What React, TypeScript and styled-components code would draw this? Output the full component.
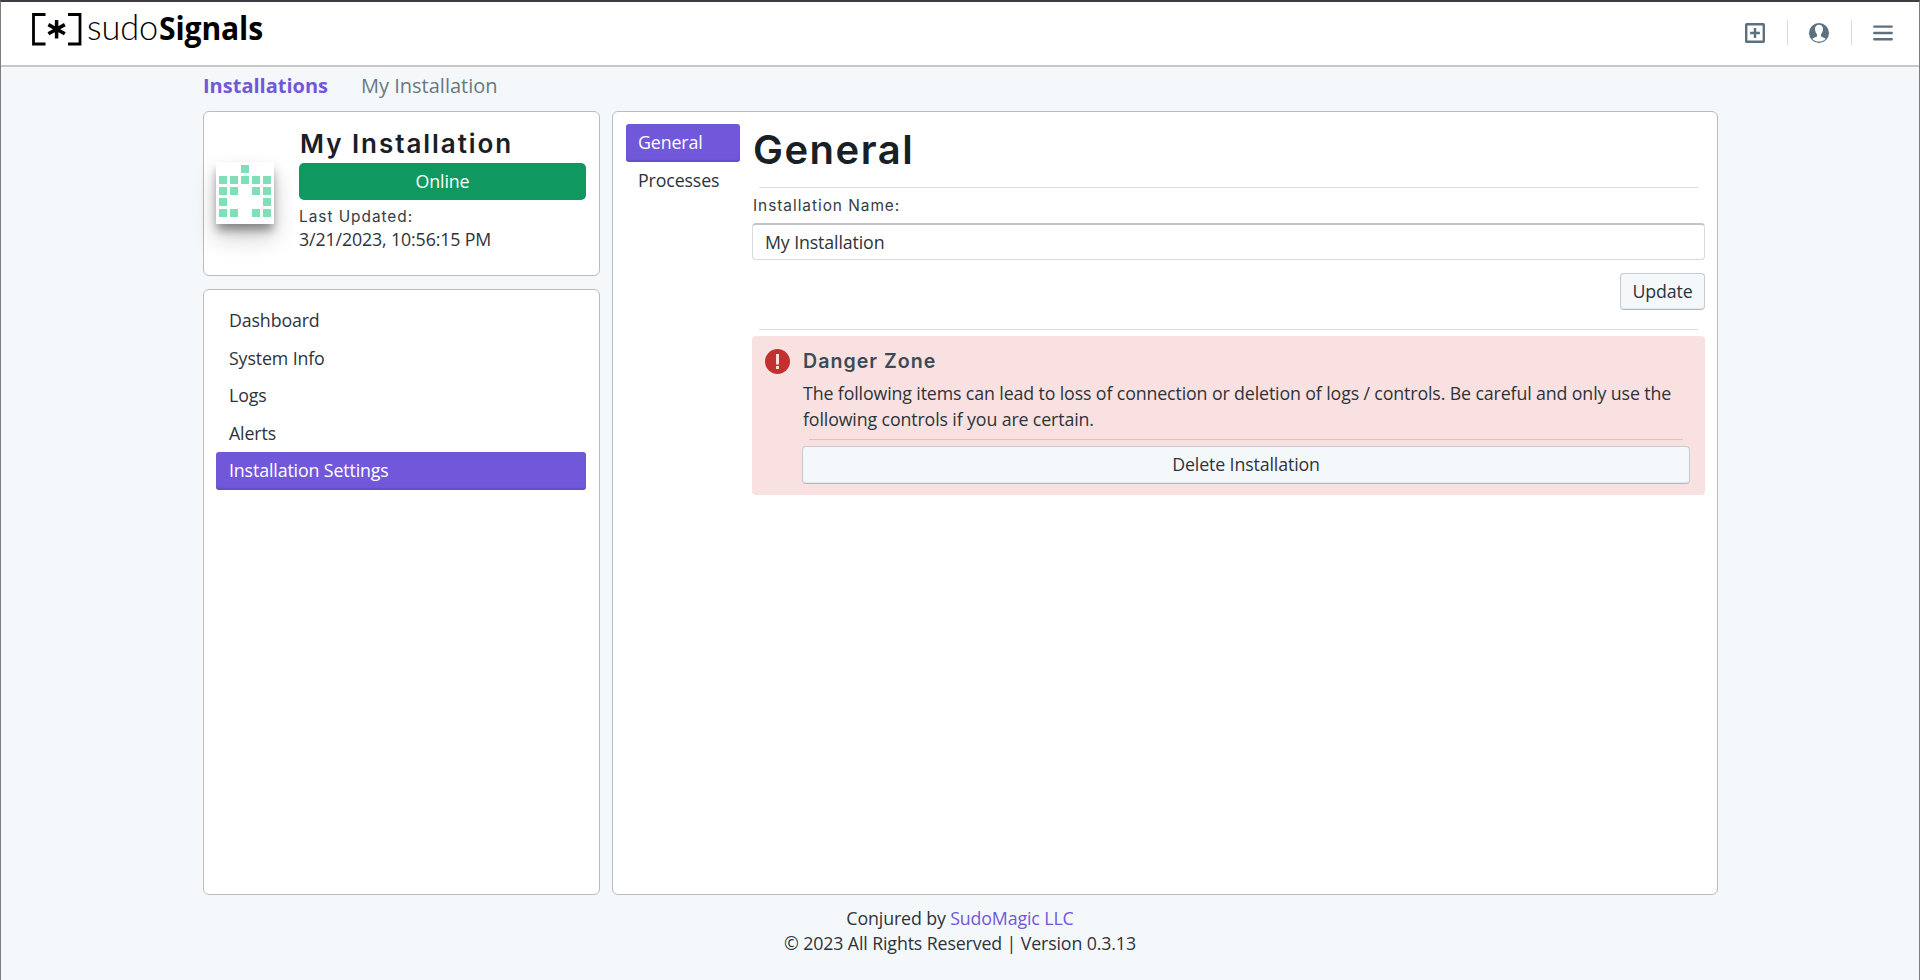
import React from "react";
import styled, { createGlobalStyle } from "styled-components";

const GlobalStyle = createGlobalStyle`
  *, *::before, *::after { box-sizing: border-box; }
  body {
    margin: 0;
    background: #f5f8fb;
    color: #2d333b;
    font-family: "Open Sans", "Noto Sans", sans-serif;
    font-size: 17.8px;
    letter-spacing: -0.13px;
    line-height: 25px;
  }
`;

const Page = styled.div`
  height: 980px;
  display: flex;
  flex-direction: column;
  overflow: hidden;
  border: 1px solid #7d7d7f;
  border-top: 2px solid #3f3c44;
  border-bottom: 0;
`;

const Header = styled.header`
  height: 65px;
  flex: none;
  display: flex;
  justify-content: space-between;
  align-items: flex-start;
  padding: 0 26px 0 27px;
  background: #fff;
  border-bottom: 2px solid #c6c7c9;
`;

const HeaderActions = styled.div`
  display: flex;
  align-items: center;
  padding-top: 18px;
`;

const Divider = styled.span`
  width: 1px;
  height: 25px;
  margin: 0 21px 0 22px;
  background: #dadbdd;
`;

const Icon = styled.svg`
  display: block;
  width: 20px;
  height: 20px;
`;

const Breadcrumbs = styled.nav`
  height: 44px;
  flex: none;
  display: flex;
  gap: 33px;
  padding: 6px 0 0 202px;
  font-size: 20px;
  letter-spacing: 0;
  line-height: 26px;
  color: #697783;
`;

const CrumbLink = styled.a`
  color: #7157d9;
  font-weight: 700;
`;

const Columns = styled.main`
  height: 784px;
  flex: none;
  display: grid;
  grid-template-columns: 397px 1106px;
  column-gap: 12px;
  padding-left: 202px;
`;

const Sidebar = styled.aside`
  display: flex;
  flex-direction: column;
  gap: 13px;
`;

const Panel = styled.section`
  background: #fff;
  border: 1px solid #b9bbbd;
  border-radius: 6px;
`;

const SummaryPanel = styled(Panel)`
  height: 165px;
  display: flex;
  padding: 14px 13px 0 12px;
`;

const Avatar = styled.div`
  width: 58px;
  height: 62px;
  flex: none;
  margin: 36px 25px 0 0;
  padding: 3px;
  background: #fff;
  box-shadow: 0 13px 24px rgba(0, 0, 0, 0.2), 0 7px 9px -1px rgba(0, 0, 0, 0.38);
`;

const Summary = styled.div`
  flex: 1;
  display: flex;
  flex-direction: column;
`;

const SummaryTitle = styled.h2`
  margin: 0 0 2px;
  padding: 1px 0 0 1px;
  font: 600 26px/34px Inter, sans-serif;
  letter-spacing: 1.95px;
  color: #182026;
`;

const Status = styled.div`
  height: 37px;
  border-radius: 5px;
  background: #0f9960;
  color: #fff;
  text-align: center;
  line-height: 36px;
`;

const Caption = styled.label`
  font: 400 15.4px/20px Inter, sans-serif;
  letter-spacing: 0.97px;
  color: #343c44;
`;

const SummaryCaption = styled(Caption)`
  margin-top: 7px;
`;

const NavPanel = styled(Panel)`
  flex: 1;
  padding: 12px 13px 12px 12px;
`;

const NavItem = styled.a<{ $active?: boolean }>`
  display: block;
  height: 37.5px;
  padding: 6px 12px 6px 13px;
  border-radius: 3px;
  ${({ $active }) =>
    $active &&
    `background: #7157d9; color: #fff; box-shadow: inset 0 -2px 1px rgba(60, 50, 110, .2);`}
`;

const TabItem = styled(NavItem)`
  padding-left: 12px;
`;

const ContentPanel = styled(Panel)`
  display: grid;
  grid-template-columns: 114px 953px;
  column-gap: 12px;
  align-content: start;
  padding: 12px 0 0 13px;
`;

const Settings = styled.div`
  display: flex;
  flex-direction: column;
`;

const Heading = styled.h1`
  margin: 0;
  height: 57px;
  padding-left: 1px;
  font: 600 40px/51px Inter, sans-serif;
  letter-spacing: 1.5px;
  color: #182026;
`;

const Rule = styled.hr`
  width: 939px;
  height: 1px;
  margin: 6px 7px;
  border: 0;
  background: #dcdde0;
`;

const FieldCaption = styled(Caption)`
  margin: 2px 0 7px 1px;
`;

const TextInput = styled.input`
  height: 37px;
  padding: 0 12px;
  border: 1px solid #d9dadc;
  border-top: 2px solid #c3c4c6;
  border-radius: 4px;
  background: #fff;
  color: inherit;
  font: inherit;
  letter-spacing: inherit;
  outline: 0;
`;

const Button = styled.button`
  height: 37px;
  padding: 0 11px 1px;
  border: 1px solid #c5cbd0;
  border-bottom-color: #b4babf;
  border-radius: 4px;
  background: #f5f8fb;
  box-shadow: inset 0 -1px 1px rgba(24, 32, 38, 0.08);
  color: inherit;
  font: inherit;
  letter-spacing: inherit;
`;

const UpdateButton = styled(Button)`
  width: 85px;
  align-self: flex-end;
  margin: 13px 0 13px;
`;

const Danger = styled.section`
  height: 159px;
  display: flex;
  gap: 12px;
  padding: 13px 15px 0 13px;
  border-radius: 4px;
  background: #f9e1e1;
`;

const AlertIcon = styled.svg`
  width: 25px;
  height: 25px;
  flex: none;
`;

const DangerBody = styled.div`
  flex: 1;
  display: flex;
  flex-direction: column;
`;

const DangerTitle = styled.h4`
  margin: 0 0 6px 1px;
  font: 600 19.6px/25px Inter, sans-serif;
  letter-spacing: 1px;
  color: #394b59;
`;

const DangerText = styled.p`
  margin: 0 0 7px 1px;
  line-height: 26px;
`;

const DangerRule = styled(Rule)`
  width: 874px;
  margin: 0 7px 6px;
  background: #d8c5c9;
`;

const DeleteButton = styled(Button)`
  height: 38px;
`;

const Footer = styled.footer`
  padding-top: 11px;
  text-align: center;
`;

const FooterLink = styled.a`
  color: #7157d9;
`;

const Logo = () => (
  <svg width="240" height="54" viewBox="28 2 240 54" fill="#000" role="img" aria-label="sudoSignals">
    <path d="M45.5 14.5H33.5V44H45.5M68 14.5H80V44H68" fill="none" stroke="#000" strokeWidth="2.8" />
    <path d="M56.6 20V38.5M48.4 24.6 64.8 33.8M64.8 24.600 48.400 33.800" stroke="#000" strokeWidth="3.5" />
    <text x="87" y="40" fontFamily="Lato" fontWeight="300" fontSize="35" textLength="71" lengthAdjust="spacingAndGlyphs">sudo</text>
    <text x="159" y="40" fontFamily="Open Sans" fontWeight="700" fontSize="31.5" textLength="104" lengthAdjust="spacingAndGlyphs">Signals</text>
  </svg>
);

const PATTERN = ["00100", "11111", "11011", "10001", "11011"];

const Identicon = () => (
  <svg width="52" height="52" viewBox="0 0 52 52" fill="#7fdfb6">
    {PATTERN.flatMap((row, y) =>
      [...row].map((cell, x) =>
        cell === "1" ? <rect key={`${x}-${y}`} x={x * 11} y={y * 11} width="8" height="8" /> : null
      )
    )}
  </svg>
);

const NAV = ["Dashboard", "System Info", "Logs", "Alerts", "Installation Settings"];

export default function App() {
  return (
    <Page>
      <GlobalStyle />
      <Header>
        <Logo />
        <HeaderActions>
          <Icon viewBox="0 0 20 20" fill="none" stroke="#5c7080">
            <rect x="1.2" y="1.2" width="17.6" height="17.6" rx=".5" strokeWidth="2.4" />
            <path d="M10 5.1V14.9M5.1 10H14.9" strokeWidth="2.5" />
          </Icon>
          <Divider />
          <Icon viewBox="0 0 20 20">
            <circle cx="10" cy="10" r="10" fill="#5c7080" />
            <path
              fill="#fff"
              d="M10 1.8c2.500 0 4.100 1.600 4 4.200-.1 2.100-.8 3.900-2 5.200v1.800c0 1.100 3.600 1.500 4.700 3-1.700 1.700-4 2.600-6.700 2.600s-5-.9-6.700-2.600c1.100-1.500 4.700-1.900 4.700-3v-1.800C6.800 9.900 6.100 8.100 6 6c-.1-2.600 1.500-4.200 4-4.200z"
            />
          </Icon>
          <Divider />
          <Icon viewBox="0 0 20 20" stroke="#5c7080" strokeWidth="2.4" strokeLinecap="round">
            <path d="M1.3 3.6H18.7M1.3 10H18.7M1.3 16.3H18.7" />
          </Icon>
        </HeaderActions>
      </Header>
      <Breadcrumbs>
        <CrumbLink>Installations</CrumbLink>
        <span>My Installation</span>
      </Breadcrumbs>
      <Columns>
        <Sidebar>
          <SummaryPanel>
            <Avatar>
              <Identicon />
            </Avatar>
            <Summary>
              <SummaryTitle>My Installation</SummaryTitle>
              <Status>Online</Status>
              <SummaryCaption>Last Updated:</SummaryCaption>
              <span>3/21/2023, 10:56:15 PM</span>
            </Summary>
          </SummaryPanel>
          <NavPanel>
            {NAV.map((name) => (
              <NavItem key={name} $active={name === "Installation Settings"}>
                {name}
              </NavItem>
            ))}
          </NavPanel>
        </Sidebar>
        <ContentPanel>
          <nav>
            <TabItem $active>General</TabItem>
            <TabItem>Processes</TabItem>
          </nav>
          <Settings>
            <Heading>General</Heading>
            <Rule />
            <FieldCaption>Installation Name:</FieldCaption>
            <TextInput defaultValue="My Installation" />
            <UpdateButton>Update</UpdateButton>
            <Rule />
            <Danger>
              <AlertIcon viewBox="0 0 25 25">
                <circle cx="12.5" cy="12.5" r="12.5" fill="#c23030" />
                <path d="M11 5h3v10.500h-3zM11 17h3v3h-3z" fill="#f9e1e1" />
              </AlertIcon>
              <DangerBody>
                <DangerTitle>Danger Zone</DangerTitle>
                <DangerText>
                  The following items can lead to loss of connection or deletion of logs / controls. Be careful and
                  only use the following controls if you are certain.
                </DangerText>
                <DangerRule />
                <DeleteButton>Delete Installation</DeleteButton>
              </DangerBody>
            </Danger>
          </Settings>
        </ContentPanel>
      </Columns>
      <Footer>
        Conjured by <FooterLink>SudoMagic LLC</FooterLink>
        <br />© 2023 All Rights Reserved | Version 0.3.13
      </Footer>
    </Page>
  );
}
